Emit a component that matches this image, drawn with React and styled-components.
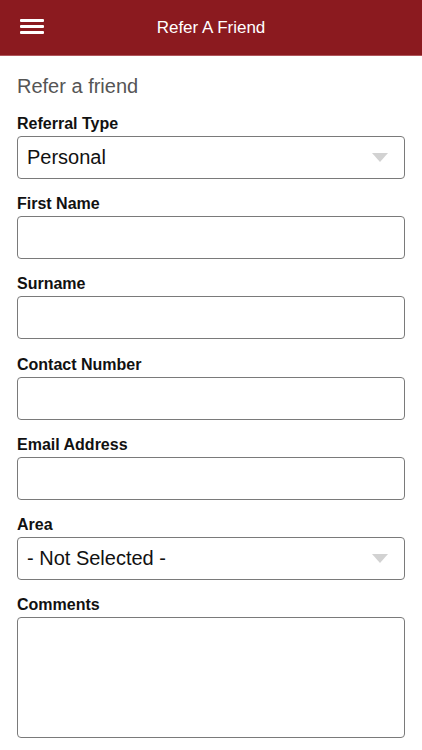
import React from 'react';
import styled, { createGlobalStyle } from 'styled-components';

const GlobalStyle = createGlobalStyle`
  html, body {
    margin: 0;
    padding: 0;
    background: #ffffff;
    font-family: 'Liberation Sans', Arial, sans-serif;
  }
`;

const Page = styled.div`
  width: 422px;
  height: 750px;
  overflow: hidden;
  display: flex;
  flex-direction: column;
  background: #ffffff;
`;

const Header = styled.header`
  height: 55px;
  flex-shrink: 0;
  background: #8b1a1f;
  border-bottom: 1px solid #b0555a;
  display: flex;
  align-items: center;
  justify-content: center;
  position: relative;
`;

const MenuButton = styled.button`
  position: absolute;
  left: 20px;
  top: 19px;
  width: 24px;
  height: 15px;
  padding: 0;
  border: none;
  background: none;
  display: flex;
  flex-direction: column;
  justify-content: space-between;

  span {
    display: block;
    height: 3px;
    background: #ffffff;
    border-radius: 1px;
  }
`;

const Title = styled.h1`
  margin: 0;
  color: #ffffff;
  font-size: 17px;
  font-weight: normal;
`;

const Form = styled.form`
  display: flex;
  flex-direction: column;
  padding: 18px 17px 0 17px;
`;

const Heading = styled.h2`
  margin: 0 0 16px;
  font-size: 20px;
  line-height: 24px;
  font-weight: normal;
  color: #555555;
`;

const Field = styled.div`
  display: flex;
  flex-direction: column;
  margin-bottom: 15.2px;
`;

const Label = styled.label`
  font-size: 16px;
  line-height: 20px;
  font-weight: bold;
  color: #111111;
  margin-bottom: 2px;
`;

const Box = styled.div`
  box-sizing: border-box;
  height: ${(p) => p.$height || 43}px;
  border: 1px solid #7a7a7a;
  border-radius: 4px;
  display: flex;
  align-items: center;
  justify-content: space-between;
  padding: 0 16px 0 9px;
  font-size: 20px;
  color: #111111;
`;

const Arrow = styled.span`
  width: 0;
  height: 0;
  border-left: 8px solid transparent;
  border-right: 8px solid transparent;
  border-top: 9px solid #d2d2d2;
`;

const fields = [
  { label: 'Referral Type', select: 'Personal' },
  { label: 'First Name' },
  { label: 'Surname' },
  { label: 'Contact Number' },
  { label: 'Email Address' },
  { label: 'Area', select: '- Not Selected -' },
  { label: 'Comments', height: 121 },
];

function App() {
  return (
    <Page>
      <GlobalStyle />
      <Header>
        <MenuButton type="button">
          <span />
          <span />
          <span />
        </MenuButton>
        <Title>Refer A Friend</Title>
      </Header>

      <Form>
        <Heading>Refer a friend</Heading>
        {fields.map((f) => (
          <Field key={f.label}>
            <Label>{f.label}</Label>
            <Box $height={f.height}>
              {f.select && (
                <>
                  <span>{f.select}</span>
                  <Arrow />
                </>
              )}
            </Box>
          </Field>
        ))}
      </Form>
    </Page>
  );
}

export default App;
